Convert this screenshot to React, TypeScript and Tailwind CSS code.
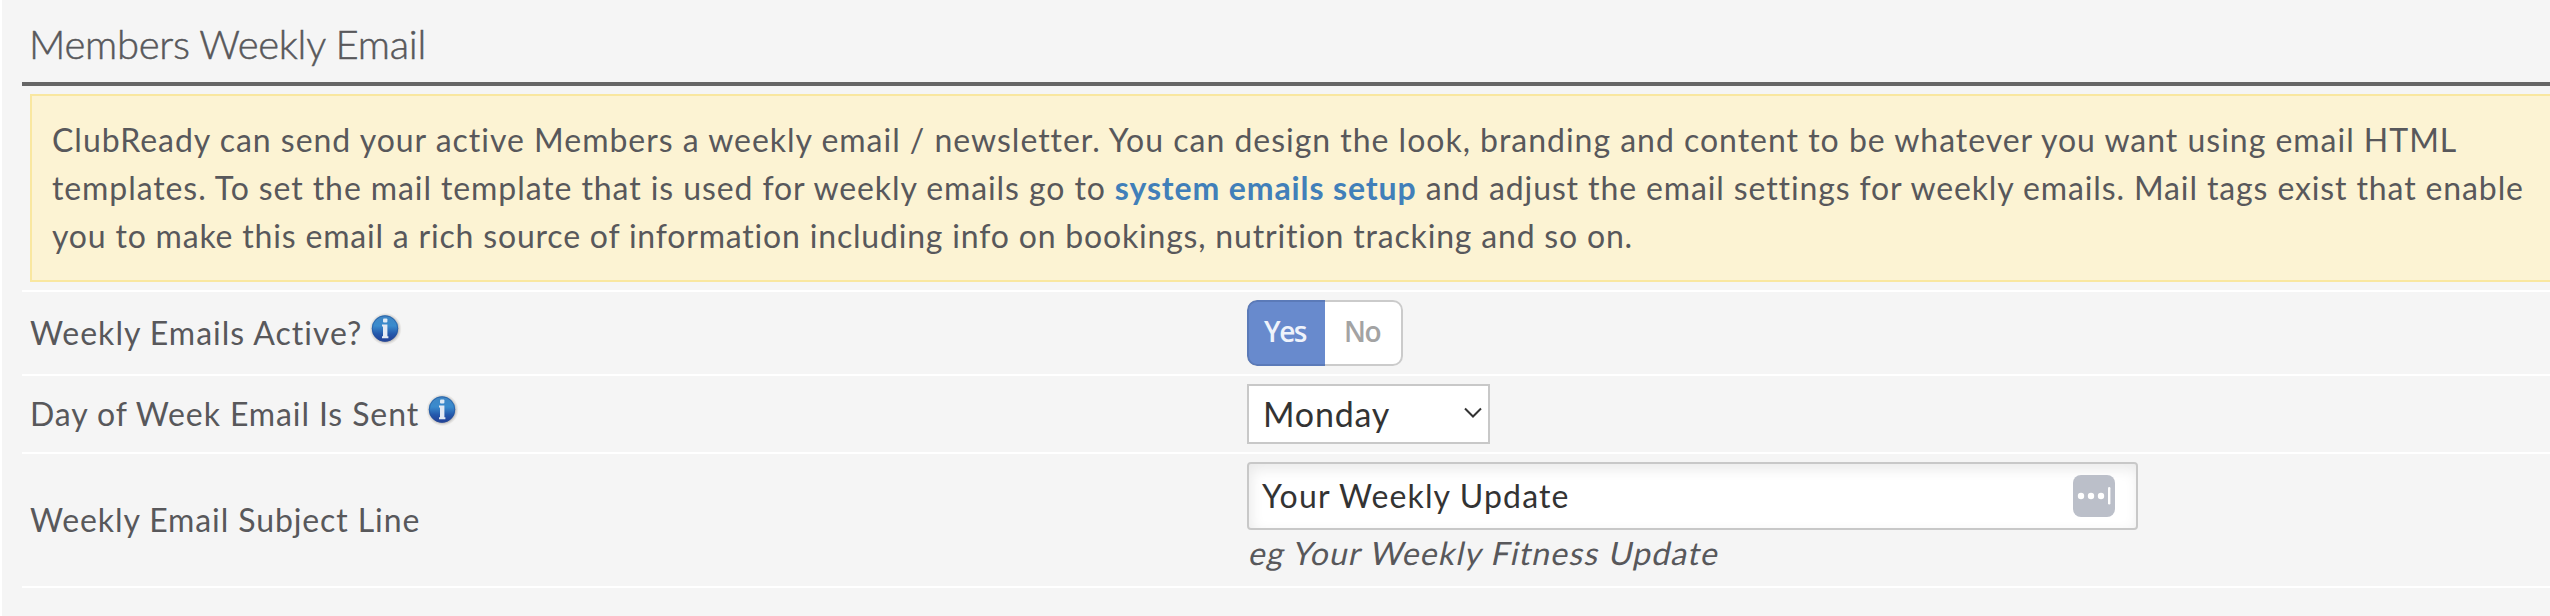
import { ReactNode } from "react";

const InfoIcon = () => (
  <svg width="32" height="32" viewBox="0 0 32 32" role="img" aria-label="More info">
    <defs>
      <linearGradient id="info-blue" x1="0" y1="0" x2="0" y2="1">
        <stop offset="0" stopColor="#3f86c4" />
        <stop offset="0.4" stopColor="#3a8bcd" />
        <stop offset="0.7" stopColor="#2459ac" />
        <stop offset="1" stopColor="#233c94" />
      </linearGradient>
      <radialGradient id="info-halo">
        <stop offset="0.78" stopColor="#b9b7b6" />
        <stop offset="0.9" stopColor="#e0dfde" />
        <stop offset="1" stopColor="#f3f2f1" />
      </radialGradient>
    </defs>
    <circle cx="15.5" cy="16" r="16" fill="url(#info-halo)" />
    <circle cx="15" cy="15.5" r="13.2" fill="url(#info-blue)" />
    <circle cx="15" cy="15.5" r="12.7" fill="none" stroke="#24529a" strokeOpacity="0.6" />
    <rect x="13" y="5.5" width="4.4" height="4" rx="1" fill="#dfeaf5" />
    <path d="M12 11.5h5.4v11.7h1v2h-6.4v-2h1v-9.7h-1z" fill="#e3e9f3" />
  </svg>
);

interface SettingRowProps {
  label: string;
  tracking: string;
  info?: boolean;
  height: string;
  children: ReactNode;
}

const SettingRow = ({ label, tracking, info = false, height, children }: SettingRowProps) => (
  <div className={`flex border-b-2 border-white ${height}`}>
    <div className="flex w-[1225px] items-center gap-2 pb-px pl-2">
      <label className={`whitespace-nowrap ${tracking}`}>{label}</label>
      {info && (
        <span className="pb-2">
          <InfoIcon />
        </span>
      )}
    </div>
    <div className="pt-2">{children}</div>
  </div>
);

export default function App() {
  return (
    <div className="h-[616px] overflow-hidden border-l-2 border-white bg-[#f5f5f5] pl-5 font-['Lato',sans-serif] text-[32px] text-[#58585b]">
      <h1 className="flex h-[86px] items-center border-b-4 border-[#666] pt-[5px] pl-[7px] text-[40px] font-light tracking-[-0.28px] [-webkit-text-stroke:0.5px_#58585b]">
        Members Weekly Email
      </h1>

      <div className="border-b-2 border-white py-2 pl-2">
        <div className="h-[188px] border-2 border-r-0 border-[#f9e7a0] bg-[#fcf3d3] pt-5 pl-5 leading-[48px] whitespace-nowrap">
          <p className="tracking-[0.98px]">
            ClubReady can send your active Members a weekly email / newsletter. You can design the look, branding and
            content to be whatever you want using email HTML
          </p>
          <p className="tracking-[0.88px]">
            <span className="tracking-[0.91px]">
              templates. To set the mail template that is used for weekly emails go to{" "}
            </span>
            <a className="font-bold text-[#417fb9]" href="#">
              system emails setup
            </a>{" "}
            and adjust the email settings for weekly emails. Mail tags exist that enable
          </p>
          <p className="tracking-[0.81px]">
            you to make this email a rich source of information including info on bookings, nutrition tracking and so
            on.
          </p>
        </div>
      </div>

      <SettingRow label="Weekly Emails Active?" tracking="tracking-[1px]" height="h-[84px]" info>
        <div className="flex h-[66px] w-[156px] overflow-hidden rounded-[10px] bg-white font-['Open_Sans',sans-serif] text-[28px] font-semibold tracking-[-1.5px] shadow-[inset_0_0_0_2px_#cbcbcb]">
          <div className="flex w-[78px] items-center justify-center rounded-l-[10px] border-2 border-r-0 border-[#5b7ab8] bg-[#688acd] pr-1 pb-[5px] text-[#eff3fb]">
            Yes
          </div>
          <div className="flex flex-1 items-center justify-center pr-1 pb-[5px] text-[#a3a3a3]">No</div>
        </div>
      </SettingRow>

      <SettingRow label="Day of Week Email Is Sent" tracking="tracking-[0.9px]" height="h-[78px]" info>
        <div className="flex h-[60px] w-[243px] items-center justify-between border-2 border-[#c8c8c8] bg-white pr-[6px] pb-0.5 pl-[14px] text-[34px] tracking-[0.8px] text-[#333]">
          Monday
          <svg width="18" height="12" viewBox="0 0 18 12" fill="none" stroke="#333" strokeWidth="2">
            <path d="M1 1.5l8 8 8-8" />
          </svg>
        </div>
      </SettingRow>

      <SettingRow label="Weekly Email Subject Line" tracking="tracking-[0.9px]" height="h-[134px]">
        <div className="flex h-[68px] w-[891px] items-center justify-between rounded border-2 border-[#c8c8c8] bg-white pr-[21px] pb-px pl-[13px] tracking-[1.15px] text-[#333] shadow-[inset_2px_5px_14px_rgba(0,0,0,0.09)]">
          Your Weekly Update
          <svg width="42" height="42" viewBox="0 0 42 42">
            <rect width="42" height="42" rx="8" fill="#bbbfc9" />
            <circle cx="8" cy="21" r="3.2" fill="#fff" />
            <circle cx="18" cy="21" r="3.2" fill="#fff" />
            <circle cx="28" cy="21" r="3.2" fill="#fff" />
            <rect x="35" y="12" width="2.4" height="17.5" rx="1.2" fill="#fff" />
          </svg>
        </div>
        <p className="-skew-x-12 pl-[3px] leading-[46px] tracking-[1.2px]">eg Your Weekly Fitness Update</p>
      </SettingRow>
    </div>
  );
}
